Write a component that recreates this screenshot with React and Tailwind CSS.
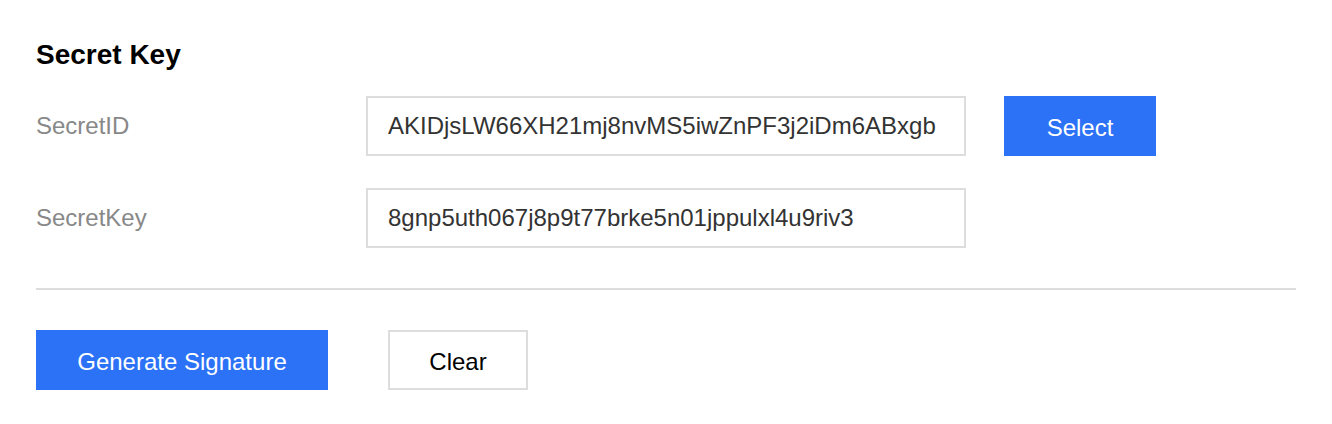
import React, { useState } from "react";

const font = { fontFamily: '"Liberation Sans", Arial, sans-serif' };

const Field = ({ label, value, onChange, children }) => (
  <div className="flex items-center">
    <label className="w-[330px] shrink-0 text-[24px] text-[#888888]">{label}</label>
    <input
      value={value}
      onChange={(e) => onChange(e.target.value)}
      className="h-[60px] w-[600px] border-2 border-[#dddddd] bg-white px-[20px] text-[24px] text-[#333333] outline-none"
    />
    {children}
  </div>
);

const App = () => {
  const [secretId, setSecretId] = useState("AKIDjsLW66XH21mj8nvMS5iwZnPF3j2iDm6ABxgb");
  const [secretKey, setSecretKey] = useState("8gnp5uth067j8p9t77brke5n01jppulxl4u9riv3");

  return (
    <div className="min-h-screen bg-white px-[36px] pt-[35px] pb-[34px]" style={font}>
      <h2 className="h-[40px] text-[28px] font-bold leading-[40px] text-black">Secret Key</h2>

      <div className="mt-[21px] flex flex-col gap-[32px]">
        <Field label="SecretID" value={secretId} onChange={setSecretId}>
          <button
            type="button"
            className="ml-[38px] h-[60px] w-[152px] bg-[#2b72f6] pt-[4px] text-[24px] text-white"
          >
            Select
          </button>
        </Field>
        <Field label="SecretKey" value={secretKey} onChange={setSecretKey} />
      </div>

      <div className="mt-[40px] h-[2px] bg-[#dddddd]" />

      <div className="mt-[40px] flex items-center gap-[60px]">
        <button
          type="button"
          className="h-[60px] w-[292px] bg-[#2b72f6] pt-[4px] text-[24px] text-white"
        >
          Generate Signature
        </button>
        <button
          type="button"
          onClick={() => {
            setSecretId("");
            setSecretKey("");
          }}
          className="h-[60px] w-[140px] border-2 border-[#dddddd] bg-white pt-[4px] text-[24px] text-black"
        >
          Clear
        </button>
      </div>
    </div>
  );
};

export default App;
